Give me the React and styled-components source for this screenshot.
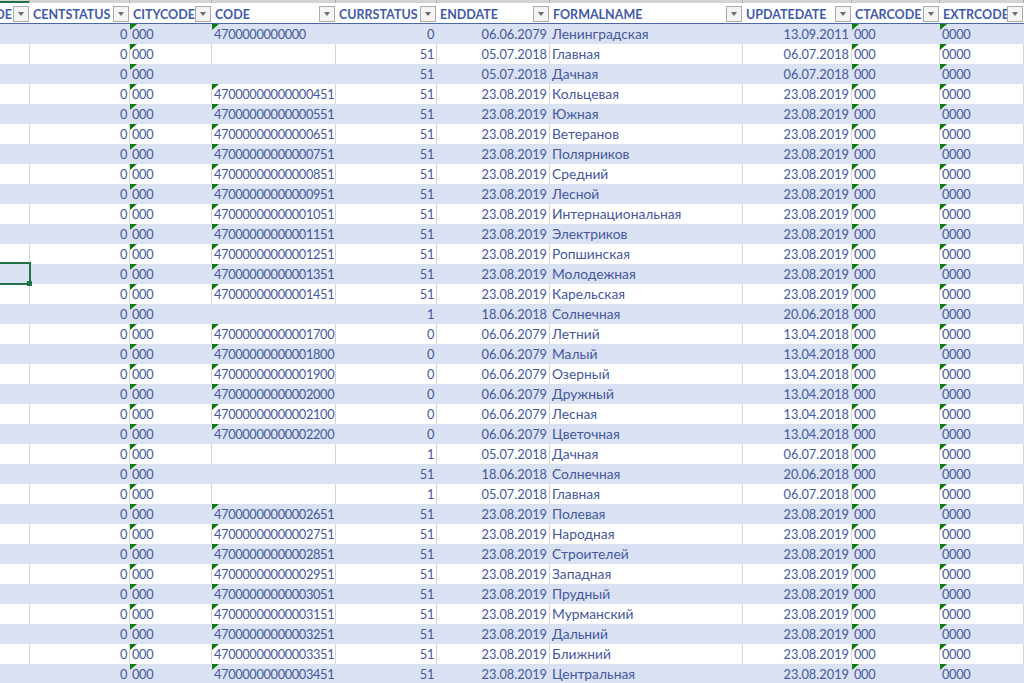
import styled, { createGlobalStyle } from 'styled-components';

const RAW_ROWS = [
  ['4700000000000', '0', '06.06.2079', 'Ленинградская', '13.09.2011'],
  ['', '51', '05.07.2018', 'Главная', '06.07.2018'],
  ['', '51', '05.07.2018', 'Дачная', '06.07.2018'],
  ['47000000000000451', '51', '23.08.2019', 'Кольцевая', '23.08.2019'],
  ['47000000000000551', '51', '23.08.2019', 'Южная', '23.08.2019'],
  ['47000000000000651', '51', '23.08.2019', 'Ветеранов', '23.08.2019'],
  ['47000000000000751', '51', '23.08.2019', 'Полярников', '23.08.2019'],
  ['47000000000000851', '51', '23.08.2019', 'Средний', '23.08.2019'],
  ['47000000000000951', '51', '23.08.2019', 'Лесной', '23.08.2019'],
  ['47000000000001051', '51', '23.08.2019', 'Интернациональная', '23.08.2019'],
  ['47000000000001151', '51', '23.08.2019', 'Электриков', '23.08.2019'],
  ['47000000000001251', '51', '23.08.2019', 'Ропшинская', '23.08.2019'],
  ['47000000000001351', '51', '23.08.2019', 'Молодежная', '23.08.2019'],
  ['47000000000001451', '51', '23.08.2019', 'Карельская', '23.08.2019'],
  ['', '1', '18.06.2018', 'Солнечная', '20.06.2018'],
  ['47000000000001700', '0', '06.06.2079', 'Летний', '13.04.2018'],
  ['47000000000001800', '0', '06.06.2079', 'Малый', '13.04.2018'],
  ['47000000000001900', '0', '06.06.2079', 'Озерный', '13.04.2018'],
  ['47000000000002000', '0', '06.06.2079', 'Дружный', '13.04.2018'],
  ['47000000000002100', '0', '06.06.2079', 'Лесная', '13.04.2018'],
  ['47000000000002200', '0', '06.06.2079', 'Цветочная', '13.04.2018'],
  ['', '1', '05.07.2018', 'Дачная', '06.07.2018'],
  ['', '51', '18.06.2018', 'Солнечная', '20.06.2018'],
  ['', '1', '05.07.2018', 'Главная', '06.07.2018'],
  ['47000000000002651', '51', '23.08.2019', 'Полевая', '23.08.2019'],
  ['47000000000002751', '51', '23.08.2019', 'Народная', '23.08.2019'],
  ['47000000000002851', '51', '23.08.2019', 'Строителей', '23.08.2019'],
  ['47000000000002951', '51', '23.08.2019', 'Западная', '23.08.2019'],
  ['47000000000003051', '51', '23.08.2019', 'Прудный', '23.08.2019'],
  ['47000000000003151', '51', '23.08.2019', 'Мурманский', '23.08.2019'],
  ['47000000000003251', '51', '23.08.2019', 'Дальний', '23.08.2019'],
  ['47000000000003351', '51', '23.08.2019', 'Ближний', '23.08.2019'],
  ['47000000000003451', '51', '23.08.2019', 'Центральная', '23.08.2019'],
];

const HEADERS = [
  { label: 'DE', clipped: true },
  { label: 'CENTSTATUS' },
  { label: 'CITYCODE' },
  { label: 'CODE' },
  { label: 'CURRSTATUS' },
  { label: 'ENDDATE' },
  { label: 'FORMALNAME' },
  { label: 'UPDATEDATE' },
  { label: 'CTARCODE' },
  { label: 'EXTRCODE' },
];

const COLUMNS = '30px 100px 82px 124px 101px 113px 193px 109px 88px 1fr';

const GlobalStyle = createGlobalStyle`
  html, body {
    margin: 0;
    padding: 0;
    background: #fff;
    overflow: hidden;
  }
`;

const Sheet = styled.div`
  position: relative;
  width: 1024px;
  height: 683px;
  overflow: hidden;
  font-family: Lato, "Noto Sans", sans-serif;
  font-size: 12.8px;
  color: #44589f;
`;

const TopStrip = styled.div`
  display: grid;
  grid-template-columns: ${COLUMNS};
  height: 3px;
  background: #d4d4d4;
`;

const TopTick = styled.div`
  border-right: 1px solid #b0b0b0;
  box-shadow: ${(p) => (p.$selected ? 'inset 0 -2px 0 #217346' : 'none')};
`;

const HeaderRow = styled.div`
  display: grid;
  grid-template-columns: ${COLUMNS};
  height: 20px;
  border-bottom: 1px solid #4a68a8;
`;

const HeaderCell = styled.div`
  position: relative;
  display: flex;
  align-items: center;
  justify-content: ${(p) => (p.$clipped ? 'flex-end' : 'flex-start')};
  padding: ${(p) => (p.$clipped ? '2px 18px 0 0' : '2px 0 0 3px')};
  overflow: hidden;
  white-space: nowrap;
  font-size: 12.5px;
  font-weight: 700;
  color: #3f5ba9;
`;

const FilterButton = styled.span`
  position: absolute;
  top: 3px;
  right: 1px;
  width: 16px;
  height: 16px;
  box-sizing: border-box;
  border: 1px solid #ababab;
  background: #f4f4f4;

  &::after {
    content: '';
    position: absolute;
    left: 3.5px;
    top: 5px;
    border-style: solid;
    border-width: 4px 3.5px 0;
    border-color: #6d6d6d transparent transparent;
  }
`;

const Row = styled.div`
  display: grid;
  grid-template-columns: ${COLUMNS};
  height: 20px;
  background: ${(p) => (p.$striped ? '#d9e1f2' : '#fff')};
`;

const Cell = styled.div`
  position: relative;
  box-sizing: border-box;
  padding: 0 0 0 2px;
  line-height: 20px;
  white-space: nowrap;
  overflow: hidden;
  letter-spacing: -0.35px;
  border-right: 1px solid ${(p) => (p.$striped ? 'transparent' : '#d4d4d4')};

  &::before {
    content: '';
    display: ${(p) => (p.$marked ? 'block' : 'none')};
    position: absolute;
    left: 0;
    top: 0;
    width: 7px;
    height: 6px;
    background: #0e7a0e;
    clip-path: polygon(0 0, 100% 0, 0 100%);
  }
`;

const NumberCell = styled(Cell)`
  padding: 0 2px 0 0;
  text-align: right;
`;

const DateCell = styled(NumberCell)`
  letter-spacing: 0;
`;

const NameCell = styled(Cell)`
  font-size: 13.8px;
  letter-spacing: 0;
`;

const Selection = styled.div`
  position: absolute;
  left: -3px;
  top: 262px;
  width: 34px;
  height: 23px;
  box-sizing: border-box;
  border: 2px solid #217346;

  &::after {
    content: '';
    position: absolute;
    right: -3px;
    bottom: -3px;
    width: 5px;
    height: 5px;
    background: #217346;
  }
`;

const App = () => {
  return (
    <Sheet>
      <GlobalStyle />
      <TopStrip>
        {HEADERS.map((header, index) => (
          <TopTick key={header.label} $selected={index === 0} />
        ))}
      </TopStrip>
      <HeaderRow>
        {HEADERS.map((header) => (
          <HeaderCell key={header.label} $clipped={header.clipped}>
            {header.label}
            <FilterButton />
          </HeaderCell>
        ))}
      </HeaderRow>
      {RAW_ROWS.map(([code, status, end, name, update], index) => {
        const striped = index % 2 === 0;
        return (
          <Row key={index} $striped={striped}>
            <Cell $striped={striped} />
            <NumberCell $striped={striped}>0</NumberCell>
            <Cell $striped={striped} $marked>000</Cell>
            <Cell $striped={striped} $marked={code !== ''}>{code}</Cell>
            <NumberCell $striped={striped}>{status}</NumberCell>
            <DateCell $striped={striped}>{end}</DateCell>
            <NameCell $striped={striped}>{name}</NameCell>
            <DateCell $striped={striped}>{update}</DateCell>
            <Cell $striped={striped} $marked>000</Cell>
            <Cell $striped={striped} $marked>0000</Cell>
          </Row>
        );
      })}
      <Selection />
    </Sheet>
  );
};

export default App;
